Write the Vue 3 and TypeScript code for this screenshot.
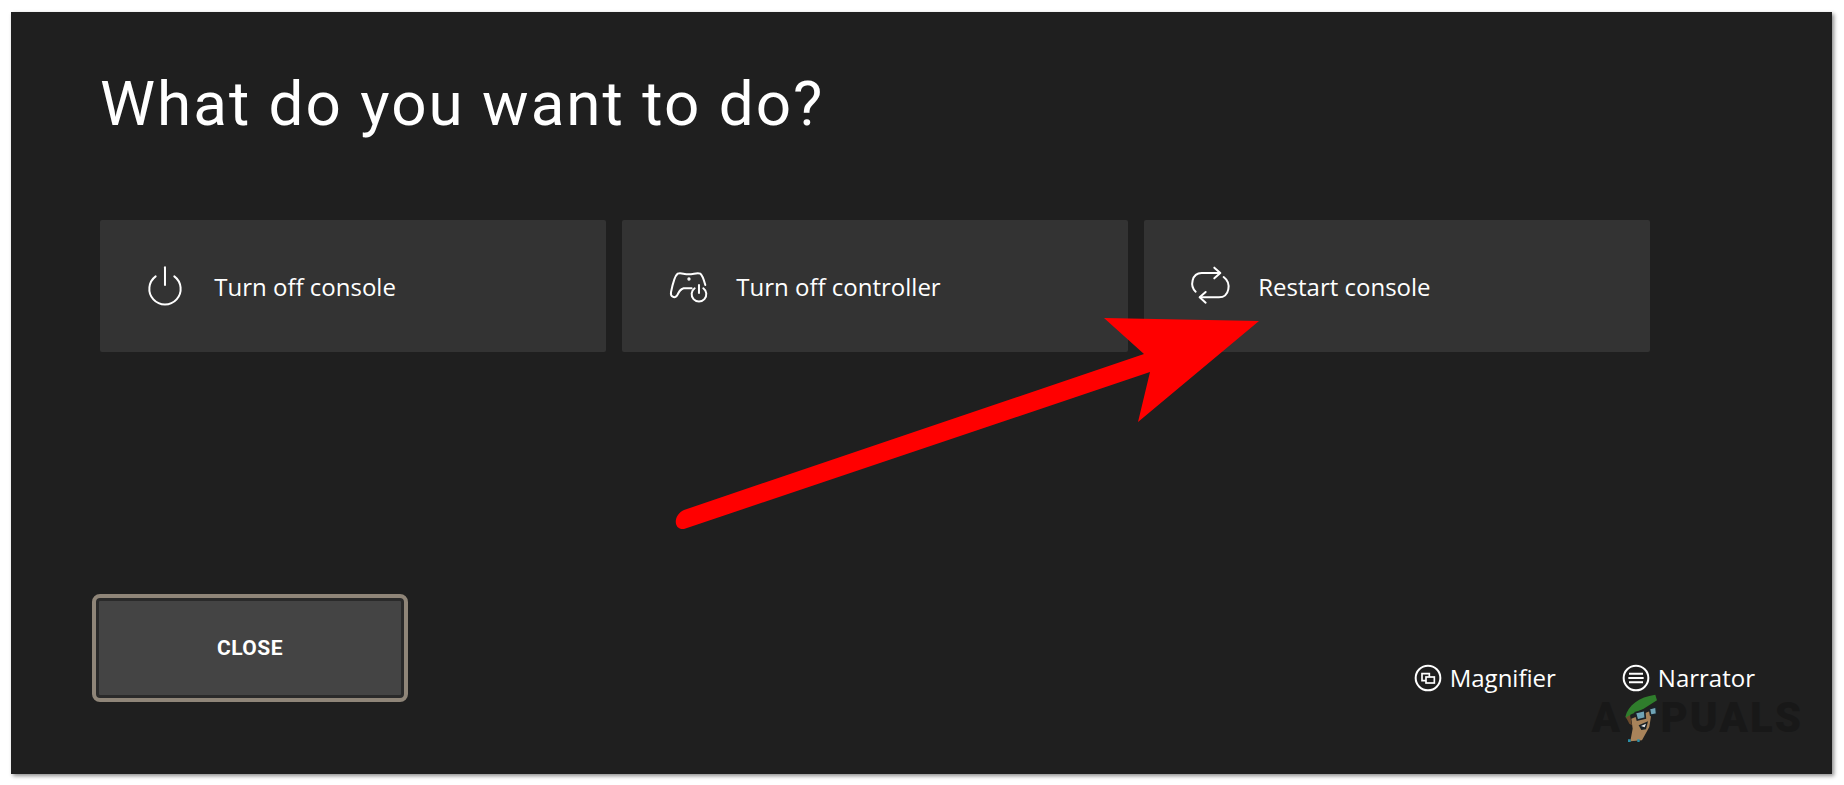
<template>
  <div class="page">
    <main class="panel">
      <h1 class="title">What do you want to do?</h1>

      <div class="cards">
        <button class="card">
          <svg class="icon" viewBox="50 45 130 130" width="43.3" height="43.3" fill="none" stroke="#fff" stroke-width="6" stroke-linecap="round">
            <path d="M82 82 A47 47 0 1 0 138 82" />
            <path d="M110 55 V108" />
          </svg>
          <span>Turn off console</span>
        </button>
        <button class="card">
          <svg class="icon" viewBox="50 45 130 130" width="43.3" height="43.3" fill="none" stroke="#fff" stroke-width="6" stroke-linecap="round" stroke-linejoin="round">
            <path d="M165 108 C160 90 156 78 150 74 C140 70 130 76 115 76 C100 76 92 70 82 74 C74 80 66 110 62 130 C60 142 72 150 80 140 C86 128 90 120 100 118 L124 118" />
            <circle cx="116" cy="90" r="2" />
            <path d="M133 118 A22 22 0 1 0 159 118" />
            <path d="M146 108 V132" />
          </svg>
          <span>Turn off controller</span>
        </button>
        <button class="card">
          <svg class="icon" viewBox="60 45 130 130" width="43.3" height="43.3" fill="none" stroke="#fff" stroke-width="6" stroke-linecap="round" stroke-linejoin="round">
            <path d="M80 128 C62 112 68 72 98 72 H152" />
            <path d="M136 56 L154 72 L136 88" />
            <path d="M164 84 C188 102 182 145 150 145 H94" />
            <path d="M110 129 L92 145 L110 161" />
          </svg>
          <span>Restart console</span>
        </button>
      </div>

      <div class="bottom">
        <button class="close"><span>CLOSE</span></button>
        <div class="shortcuts">
          <div class="shortcut">
            <svg viewBox="36 26 84 84" width="28" height="28" fill="none" stroke="#fff" stroke-width="6">
              <circle cx="78" cy="68" r="37" />
              <path stroke-width="5" d="M72 76 H60 V55 H82 V64" />
              <rect stroke-width="5" x="72" y="65" width="25" height="18" />
            </svg>
            <span>Magnifier</span>
          </div>
          <div class="shortcut narrator">
            <svg viewBox="101 26 84 84" width="28" height="28" fill="none" stroke="#fff" stroke-width="6">
              <circle cx="143" cy="68" r="37" />
              <path d="M122 55 H164 M120 68 H166 M122 81 H164" />
            </svg>
            <span>Narrator</span>
          </div>
        </div>
      </div>

      <svg class="arrow" viewBox="0 0 620 240" width="620" height="240">
        <path fill="#ff0000" d="M586 0 L431 -3 L471 33 L11 189 C0 194 0 209 11 208 L477 51 L465 101 Z" transform="translate(0 3)" />
      </svg>

      <div class="watermark">
        <span>A</span>
        <svg viewBox="100 110 115 150" width="38.3" height="50">
          <path fill="#a8835a" d="M128 190 L190 165 L182 215 L160 255 L125 258 L132 220 Z" />
          <path fill="#2f7d2c" d="M110 185 C118 150 150 125 200 118 L205 135 L165 160 L125 178 L122 198 Z" />
          <path fill="#6b4a2c" d="M112 186 L124 180 L130 210 L122 205 Z" />
          <path fill="#6fa3b5" stroke="#1b2226" stroke-width="5" d="M140 172 L168 165 L170 188 L146 194 Z M182 160 L202 155 L204 176 L186 180 Z" />
          <path fill="#1b2226" d="M150 210 L178 198 L172 222 L158 224 Z" />
          <path fill="#e8e8e8" d="M157 212 L172 205 L168 216 Z" />
          <path fill="#2a8fa8" d="M118 252 h8 v8 h-8 Z M146 252 h7 v8 h-7 Z" />
        </svg>
        <span>PUALS</span>
      </div>
    </main>
  </div>
</template>

<script setup lang="ts">
</script>

<style>
body {
  background: #fff;
}
</style>

<style scoped>
.page {
  width: 1844px;
  height: 785px;
  box-sizing: border-box;
  padding: 12px 12px 11px 11px;
  background: #fff;
  overflow: hidden;
}

.panel {
  position: relative;
  box-sizing: border-box;
  height: 100%;
  padding: 0 0 72px 89px;
  display: flex;
  flex-direction: column;
  background: #1f1f1f;
  box-shadow: 2px 2px 4px rgba(0, 0, 0, 0.45);
  color: #fff;
  font-family: "Open Sans", sans-serif;
}

.title {
  margin: 54px 0 0;
  font-family: Roboto, sans-serif;
  font-size: 62px;
  font-weight: 400;
  line-height: 76px;
  letter-spacing: 2px;
}

.cards {
  display: grid;
  grid-template-columns: repeat(3, 506px);
  gap: 16px;
  margin-top: 78px;
}

.card {
  display: flex;
  align-items: center;
  height: 132px;
  padding: 0 0 0 45px;
  gap: 26px;
  border: 0;
  border-radius: 2px;
  background: #333;
  color: #fff;
  font: inherit;
  font-size: 24px;
  text-align: left;
}

.bottom {
  display: flex;
  justify-content: space-between;
  align-items: flex-start;
  margin-top: auto;
  margin-left: -8px;
}

.close {
  width: 316px;
  height: 108px;
  box-sizing: border-box;
  padding: 0;
  border: 4px solid #8f8578;
  border-radius: 8px;
  background: #444;
  box-shadow: inset 0 0 0 3px #2a2a2a;
  color: #fff;
  font-family: Roboto, sans-serif;
  font-size: 21px;
  font-weight: 700;
  letter-spacing: 0.5px;
}

.shortcuts {
  display: flex;
  gap: 66px;
  margin: 70px 77px 0 0;
}

.shortcut {
  display: flex;
  align-items: center;
  gap: 8px;
  font-size: 24px;
  line-height: 28px;
}

.arrow {
  position: absolute;
  left: 662px;
  top: 306px;
  overflow: visible;
}

.watermark {
  position: absolute;
  right: 29px;
  top: 680px;
  display: flex;
  align-items: center;
  color: #181818;
  font-family: Roboto, sans-serif;
  font-size: 42px;
  font-weight: 900;
  letter-spacing: 2px;
}
</style>
